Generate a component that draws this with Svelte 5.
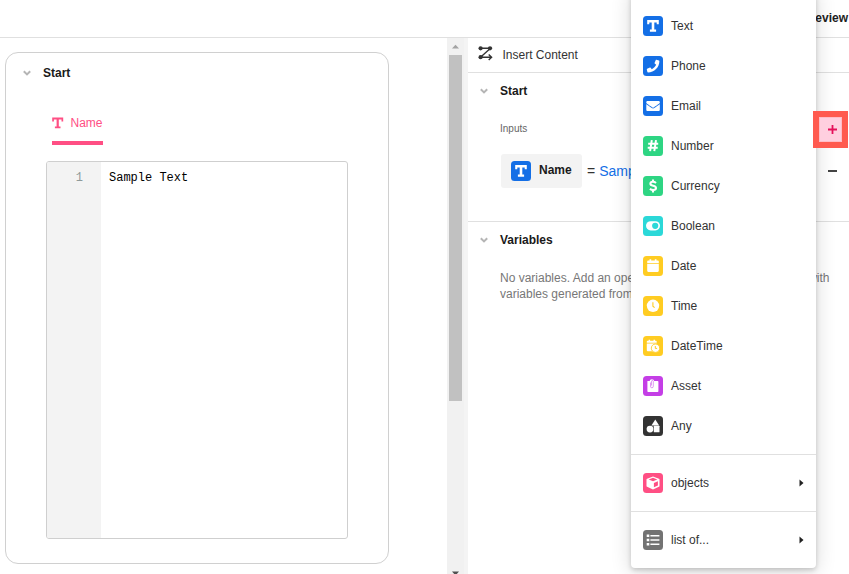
<script>
  const types = [
    { label: 'Text', icon: 'text', color: '#146fe6' },
    { label: 'Phone', icon: 'phone', color: '#146fe6' },
    { label: 'Email', icon: 'email', color: '#146fe6' },
    { label: 'Number', icon: 'number', color: '#2ed583' },
    { label: 'Currency', icon: 'currency', color: '#2ed583' },
    { label: 'Boolean', icon: 'boolean', color: '#2bd8d8' },
    { label: 'Date', icon: 'date', color: '#ffcc22' },
    { label: 'Time', icon: 'time', color: '#ffcc22' },
    { label: 'DateTime', icon: 'datetime', color: '#ffcc22' },
    { label: 'Asset', icon: 'asset', color: '#c43ee6' },
    { label: 'Any', icon: 'any', color: '#333333' }
  ];
  const groups = [
    types,
    [{ label: 'objects', icon: 'objects', color: '#ff4f84', sub: true }],
    [{ label: 'list of...', icon: 'list', color: '#737373', sub: true }]
  ];
</script>

{#snippet chevron()}
  <svg class="chevron" width="8" height="6" viewBox="0 0 8 6"><path d="M.8 1.2 4 4.4 7.2 1.2" fill="none" stroke="#b5b5b5" stroke-width="2" /></svg>
{/snippet}

{#snippet badge(icon, color)}
  <svg class="badge" width="20" height="20" viewBox="0 0 20 20" fill="#fff">
    <rect width="20" height="20" rx="3.5" fill={color} />
    {#if icon === 'text'}
      <path d="M4.2 4h11.6v4.2h-2.1V6.4h-2.4v7.2h1.8v2.1H6.9v-2.1h1.8V6.4H6.3v1.8H4.2z" />
    {:else if icon === 'phone'}
      <path transform="translate(3.8 3.8) scale(.0246)" d="M493.4 24.6l-104-24c-11.3-2.6-22.9 3.3-27.5 13.9l-48 112c-4.2 9.8-1.4 21.3 6.9 28l60.6 49.6c-36 76.7-98.9 140.5-177.2 177.2l-49.6-60.6c-6.8-8.3-18.2-11.1-28-6.9l-112 48C3.9 366.5-2 378.1.6 389.4l24 104C27.1 504.2 36.7 512 48 512c256.1 0 464-207.5 464-464 0-11.2-7.7-20.9-18.6-23.4z" />
    {:else if icon === 'email'}
      <path transform="translate(3.3 3.2) scale(.0264)" d="M502.3 190.8c3.9-3.1 9.7-.2 9.7 4.7V400c0 26.5-21.5 48-48 48H48c-26.5 0-48-21.5-48-48V195.6c0-5 5.7-7.8 9.7-4.7 22.4 17.4 52.1 39.5 154.1 113.6 21.1 15.4 56.7 47.8 92.2 47.6 35.7.3 72-32.8 92.3-47.6 102-74.1 131.6-96.3 154-113.7zM256 320c23.2.4 56.6-29.2 73.4-41.4 132.7-96.3 142.8-104.7 173.4-128.7 5.8-4.5 9.2-11.5 9.2-18.9v-19c0-26.5-21.5-48-48-48H48c-26.5 0-48 21.5-48 48v19c0 7.4 3.4 14.3 9.2 18.9 30.6 23.9 40.7 32.4 173.4 128.7 16.8 12.2 50.2 41.8 73.4 41.4z" />
    {:else if icon === 'number'}
      <path d="M8.8 4.2 7.1 15.2M13 4.2l-1.7 11M5.2 7.7h10M4.7 11.8h10" stroke="#fff" stroke-width="2" />
    {:else if icon === 'currency'}
      <path d="M13 7C12 6.1 10.9 5.8 9.8 5.8 8.3 5.8 7.4 6.6 7.4 7.7c0 2.8 5.6 1.5 5.6 4.4 0 1.3-1.1 2-2.8 2-1.3 0-2.4-.5-3.3-1.2M10 3.6v2.6M10 13.9v2.5" fill="none" stroke="#fff" stroke-width="2.1" />
    {:else if icon === 'boolean'}
      <rect x="3" y="5.2" width="14" height="9.2" rx="4.6" />
      <circle cx="12.2" cy="9.8" r="3.1" fill={color} />
    {:else if icon === 'date'}
      <path d="M4.2 5.5q0-.9.9-.9h1.4V3.2h1.7v1.4h3.6V3.2h1.7v1.4h1.4q.9 0 .9.9v1.6H4.2zM4.2 7.8h11.6v7q0 1.1-1.1 1.1H5.3q-1.1 0-1.1-1.1z" />
    {:else if icon === 'time'}
      <circle cx="10" cy="9.8" r="6.2" />
      <path d="M9.9 6.2v4l1.7 1.5" fill="none" stroke={color} stroke-width="1.1" />
    {:else if icon === 'datetime'}
      <path d="M3.8 5.6q0-.8.8-.8h1V3.7h1.5v1.1h3.4V3.7H12v1.1h.9q.8 0 .8.8v1.1H3.8zM3.8 7.6h9.9v7.6H4.8q-1 0-1-1z" />
      <circle cx="12.5" cy="12.2" r="4.2" stroke={color} stroke-width=".9" />
      <path d="M12.3 10v2.4h1.8" fill="none" stroke={color} stroke-width="1" />
    {:else if icon === 'asset'}
      <path d="M4.4 5h2.2q.2-1.8 2.3-1.8T11.2 5h3.4q.8 0 .8.8v9.5q0 .7-.8.7H5.2q-.8 0-.8-.7z" />
      <path d="M7.5 6.5v3.8q0 1.5 1.4 1.5t1.4-1.5V5.5q0-1-.9-1t-.9 1v4" fill="none" stroke={color} stroke-width=".8" opacity=".65" />
    {:else if icon === 'any'}
      <path d="m12.3 3.6 3.9 5.8H8.4z" />
      <circle cx="7" cy="13.1" r="3.4" />
      <rect x="10.8" y="9.8" width="5.7" height="6.4" rx=".5" />
    {:else if icon === 'objects'}
      <path d="m10 3.4 5.9 2.3q.6.2.6.8v6.4q0 .6-.6.9L10 16.4l-5.9-2.6q-.6-.3-.6-.9V6.5q0-.6.6-.8z" />
      <path d="m5.7 6.5 4.3-1.7 4.3 1.7L10 8.2zM10.9 10l4-1.7v4.1l-4 1.8z" fill={color} />
    {:else if icon === 'list'}
      <path d="M3.7 4.5h2.6v2.6H3.7zM3.7 8.7h2.6v2.6H3.7zM3.7 12.9h2.6v2.6H3.7zM7.4 5h9v1.6h-9zM7.4 9.2h9v1.6h-9zM7.4 13.4h9V15h-9z" />
    {/if}
  </svg>
{/snippet}

<div class="app">
  <header>Preview</header>
  <div class="body">
    <main>
      <section class="card">
        <div class="card-title">{@render chevron()}<b>Start</b></div>
        <div class="tab">
          <svg width="12" height="12" viewBox="0 0 12 12"><path d="M.2.6h11v4H9.5V2.5H6.8v7h1.7v1.8H2.9V9.5h1.7v-7H1.9v2.1H.2z" fill="#ff4f84" /></svg>
          <span>Name</span>
        </div>
        <div class="editor">
          <div class="gutter">1</div>
          <div class="code">Sample Text</div>
        </div>
      </section>
    </main>
    <div class="scroll">
      <svg width="17" height="17" viewBox="0 0 17 17"><path d="m5 10.5 3.5-3.7 3.5 3.7z" fill="#a3a3a3" /></svg>
      <div class="thumb"></div>
      <svg class="down" width="17" height="7" viewBox="0 0 17 7"><path d="M5 4.5h7L8.5 8.5z" fill="#505050" /></svg>
    </div>
    <aside>
      <div class="insert">
        <svg width="15" height="15" viewBox="0 0 15 15" fill="none" stroke="#333" stroke-width="1.4">
          <path d="M2.5 2.3h10L2.5 11.2h10.8M10.7 8.4l2.9 2.8-2.9 2.8" />
          <g fill="#333" stroke="none"><circle cx="2.6" cy="2.3" r="2.1" /><circle cx="12" cy="2.3" r="2.1" /><circle cx="2.6" cy="11.2" r="2.1" /></g>
        </svg>
        <span>Insert Content</span>
      </div>
      <section class="inputs">
        <div class="title">{@render chevron()}<b>Start</b></div>
        <div class="caption">Inputs</div>
        <div class="row">
          <div class="chip">{@render badge('text', '#146fe6')}<b>Name</b></div>
          <span class="eq">=</span><span class="value">Sample Text</span>
          <i class="minus"></i>
        </div>
      </section>
      <section>
        <div class="title">{@render chevron()}<b>Variables</b></div>
        <p>No variables. Add an operation to start populating this list <span>with</span><br />variables generated from it.</p>
      </section>
    </aside>
  </div>

  <div class="menu">
    {#each groups as group}
      <ul>
        {#each group as item}
          <li>
            {@render badge(item.icon, item.color)}
            <span>{item.label}</span>
            {#if item.sub}
              <svg class="arrow" width="5" height="8" viewBox="0 0 5 8"><path d="M.5.5 4.5 4l-4 3.5z" fill="#222" /></svg>
            {/if}
          </li>
        {/each}
      </ul>
    {/each}
  </div>

  <div class="highlight">
    <svg width="9" height="9" viewBox="0 0 9 9"><path d="M4.5 0v9M0 4.5h9" stroke="#e5105a" stroke-width="1.8" /></svg>
  </div>
</div>

<style>
  .app {
    position: relative;
    display: flex;
    flex-direction: column;
    width: 849px;
    height: 574px;
    overflow: hidden;
    box-sizing: border-box;
    background: #fff;
    color: #333;
    font: 12px/16px 'Liberation Sans', Arial, sans-serif;
  }
  .app :global(*) { box-sizing: border-box; }
  svg { display: block; flex: none; }
  b { color: #1a1a1a; }
  header {
    flex: none;
    height: 38px;
    padding: 10px 1px 0 0;
    border-bottom: 1px solid #e0e0e0;
    text-align: right;
    font-weight: 700;
    color: #222;
  }
  .body { flex: 1; min-height: 0; display: flex; }
  main { width: 447px; padding: 14px 0 0 5px; }
  .card {
    width: 384px;
    height: 512px;
    padding: 12px 40px 24px;
    border: 1px solid #d0d0d0;
    border-radius: 13px;
    display: flex;
    flex-direction: column;
  }
  .card-title { display: flex; align-items: center; gap: 12px; margin-left: -23px; height: 16px; }
  .tab {
    display: flex;
    gap: 7px;
    align-self: flex-start;
    height: 35px;
    width: 51px;
    margin: 29px 0 16px 6px;
    padding-top: 5px;
    border-bottom: 4px solid #ff4f84;
    color: #ff4f84;
    white-space: nowrap;
  }
  .tab svg { margin-top: 2px; margin-right: -.5px; }
  .editor {
    width: 302px;
    height: 378px;
    display: flex;
    border: 1px solid #cfcfcf;
    border-radius: 3px;
    overflow: hidden;
    font-family: 'Liberation Mono', 'Courier New', monospace;
  }
  .gutter { width: 54px; padding: 8px 18px 0 0; text-align: right; background: #f3f3f3; color: #8f9a9a; }
  .code { padding: 8px; color: #000; }
  .scroll { width: 21px; background: #f1f1f1; border-right: 4px solid #f4f4f4; display: flex; flex-direction: column; }
  .thumb { width: 13px; height: 346px; margin-left: 2px; background: #c1c1c1; }
  .down { margin-top: auto; }
  aside { flex: 1; min-width: 0; }
  section { display: flow-root; }
  section.card { display: flex; }
  .insert { display: flex; gap: 9.5px; height: 35px; padding: 8px 0 0 10px; border-bottom: 1px solid #e0e0e0; white-space: nowrap; }
  .insert span { margin-top: 1px; }
  .inputs { height: 149px; border-bottom: 1px solid #e0e0e0; }
  .title { display: flex; align-items: center; gap: 12px; height: 16px; margin: 10px 0 0 12px; }
  .caption { margin: 22px 0 0 32px; font-size: 10px; color: #666; }
  .row { display: flex; align-items: center; height: 34px; margin: 17px 12px 0 33px; white-space: nowrap; }
  .chip { display: flex; align-items: center; gap: 8px; width: 81px; height: 34px; padding-left: 10px; border-radius: 3px; background: #f3f3f3; }
  .chip b { margin-top: -3px; }
  .eq { margin-left: 5px; font-size: 14px; }
  .value { margin-left: 4px; font-size: 14px; color: #146fe6; }
  .minus { width: 9px; height: 2px; margin-left: auto; background: #444; }
  p { margin: 22px 0 0 32px; color: #777; white-space: nowrap; }
  p span { margin-left: 2px; }
  .menu {
    position: absolute;
    left: 631px;
    top: -10px;
    width: 185px;
    height: 578px;
    padding-top: 8px;
    border-radius: 4px;
    background: #fff;
    box-shadow: 0 2px 5px rgba(0, 0, 0, .18), 0 3px 20px 1px rgba(0, 0, 0, .14);
  }
  ul { list-style: none; margin: 0; padding: 8px 0; }
  ul + ul { border-top: 1px solid #e0e0e0; }
  li { display: flex; align-items: center; gap: 8px; height: 40px; padding: 0 12px; }
  .arrow { margin-left: auto; }
  .highlight {
    position: absolute;
    left: 813px;
    top: 111px;
    width: 35px;
    height: 37px;
    padding-left: 4px;
    display: flex;
    align-items: center;
    justify-content: center;
    border: 6px solid #ff5a4f;
    background: #ffcfdf;
    box-shadow: inset 0 0 0 1px #ffbdc6;
  }
</style>
